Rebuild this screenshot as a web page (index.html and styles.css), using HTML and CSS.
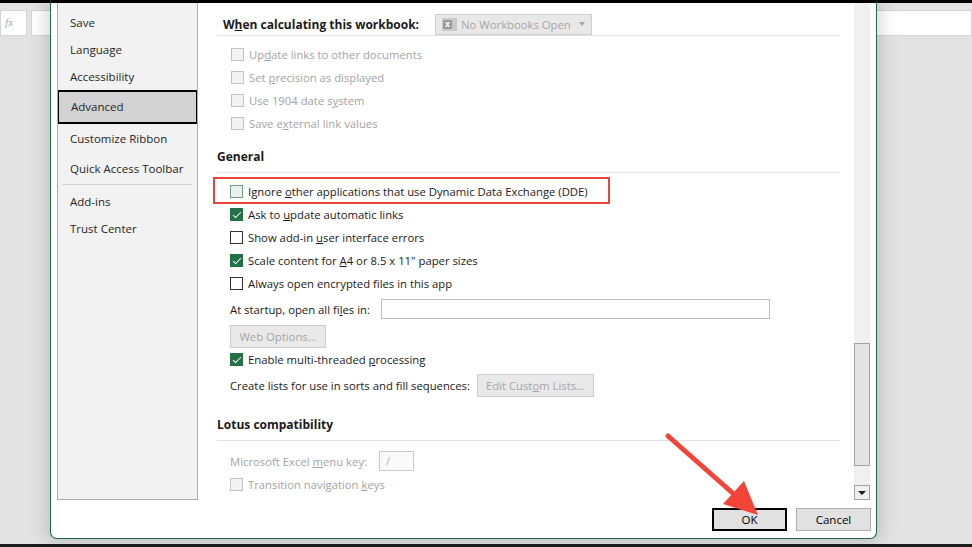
FILE: index.html
```html
<!DOCTYPE html>
<html lang="en">

<head>
  <meta charset="UTF-8" />
  <meta name="viewport" content="width=device-width, initial-scale=1.0" />
  <title>Excel Options - Advanced</title>
  <link rel="stylesheet" href="styles.css">
</head>

<body>
  <div class="excel">
    <div class="formula-bar">
      <div class="fx">fx</div>
      <div class="formula-input"></div>
    </div>
    <div class="sheet"></div>
  </div>

  <div class="dialog">
    <div class="dialog-body">
      <div class="nav">
        <ul class="nav-list">
          <li class="nav-item">Save</li>
          <li class="nav-item">Language</li>
          <li class="nav-item">Accessibility</li>
          <li class="nav-item active">Advanced</li>
          <li class="nav-item tall">Customize Ribbon</li>
          <li class="nav-item tall">Quick Access Toolbar</li>
          <li class="nav-sep"></li>
          <li class="nav-item">Add-ins</li>
          <li class="nav-item">Trust Center</li>
        </ul>
      </div>

      <div class="pane">
        <div class="content">
          <div class="subhead">
            <span>W<u>h</u>en calculating this workbook:</span>
            <div class="dropdown">
              <span class="xl-icon"><span class="xl-mark">x</span></span>
              <span>No Workbooks Open</span>
              <span class="caret"></span>
            </div>
          </div>
          <div class="group first">
            <div class="row disabled"><span class="cb"></span><span>Up<u>d</u>ate links to other documents</span></div>
            <div class="row disabled"><span class="cb"></span><span>Set <u>p</u>recision as displayed</span></div>
            <div class="row disabled"><span class="cb"></span><span>Use 1904 date s<u>y</u>stem</span></div>
            <div class="row disabled"><span class="cb"></span><span>Save e<u>x</u>ternal link values</span></div>
          </div>

          <div class="section-title">General</div>
          <div class="group">
            <div class="row highlight">
              <span class="cb focus"></span>
              <span>Ignore <u>o</u>ther applications that use Dynamic Data Exchange (DDE)</span>
              <span class="callout-box"></span>
            </div>
            <div class="row"><span class="cb checked"></span><span>Ask to <u>u</u>pdate automatic links</span></div>
            <div class="row"><span class="cb"></span><span>Show add-in <u>u</u>ser interface errors</span></div>
            <div class="row"><span class="cb checked"></span><span>Scale content for <u>A</u>4 or 8.5 x 11" paper sizes</span></div>
            <div class="row"><span class="cb"></span><span>Always open encrypted files in this app</span></div>
            <div class="field startup">
              <span class="field-label">At startup, open all fi<u>l</u>es in:</span>
              <span class="text-input wide"></span>
            </div>
            <button class="btn disabled-btn web-options">Web Options...</button>
            <div class="row"><span class="cb checked"></span><span>Enable multi-threaded <u>p</u>rocessing</span></div>
            <div class="field lists">
              <span>Create lists for use in sorts and fill sequences:</span>
              <button class="btn disabled-btn custom-lists">Edit Cust<u>o</u>m Lists...</button>
            </div>
          </div>

          <div class="section-title lotus">Lotus compatibility</div>
          <div class="group">
            <div class="field menu-key disabled">
              <span class="field-label">Microsoft Excel <u>m</u>enu key:</span>
              <span class="text-input short">/</span>
            </div>
            <div class="row disabled transition"><span class="cb"></span><span>Transition navigation <u>k</u>eys</span></div>
          </div>
        </div>

        <div class="scrollbar">
          <div class="thumb"></div>
          <div class="scroll-down"><span class="down-caret"></span></div>
        </div>
      </div>
    </div>

    <div class="dialog-footer">
      <button class="btn default">OK</button>
      <button class="btn">Cancel</button>
    </div>
  </div>

  <svg class="callout-arrow" width="110" height="95" viewBox="660 428 110 95">
    <line x1="668" y1="436" x2="736" y2="496" stroke="#f2453a" stroke-width="5" stroke-linecap="round" />
    <polygon points="758,515 723,504 744,481" fill="#f2453a" />
  </svg>
</body>

</html>
```

FILE: styles.css
```css
* {
  box-sizing: border-box;
}

body {
  margin: 0;
  width: 972px;
  height: 547px;
  overflow: hidden;
  position: relative;
  background: #e3e3e3;
  font-family: "Open Sans", "Noto Sans", sans-serif;
  font-size: 11.3px;
  color: #1a1a1a;
}

/* excel window behind the dialog */
.excel {
  height: 100%;
  display: flex;
  flex-direction: column;
  border-top: 3px solid #000;
  border-bottom: 3px solid #1c1c1c;
}

.formula-bar {
  display: flex;
  gap: 4px;
  height: 26px;
  margin-top: 7px;
}

.fx {
  width: 27px;
  background: #fff;
  border: 1px solid #d4d4d4;
  font-family: "Liberation Serif", serif;
  font-style: italic;
  color: #a8a8a8;
  padding-left: 4px;
  line-height: 23px;
}

.formula-input {
  flex: 1;
  background: #fff;
  border: 1px solid #d4d4d4;
}

.sheet {
  flex: 1;
}

/* dialog */
.dialog {
  position: absolute;
  left: 50px;
  top: 0;
  width: 827px;
  height: 539px;
  background: #fff;
  border: 1px solid #1f6c43;
  border-top: 3px solid #000;
  border-radius: 0 0 7px 7px;
  box-shadow: 0 0 18px 4px rgba(0, 0, 0, 0.16);
  display: flex;
  flex-direction: column;
}

.dialog-body {
  height: 497px;
  display: flex;
  padding-left: 6px;
}

.nav {
  width: 141px;
  background: #f2f2f2;
  border: 1px solid #ababab;
  border-top: none;
  overflow: hidden;
}

.nav-list {
  margin: 6px 0 0;
  padding: 0;
  list-style: none;
}

.nav-item {
  height: 27px;
  line-height: 27px;
  padding-left: 12px;
  color: #262626;
  font-size: 11.5px;
}

.nav-item.tall {
  height: 30px;
  line-height: 30px;
}

.nav-item.active {
  height: 34px;
  line-height: 30px;
  margin: 0 -1px;
  border: 2px solid #000;
  background: #d3d3d3;
}

.nav-sep {
  height: 1px;
  background: #d2d2d2;
  margin: 0 5px 3px 5px;
}

.pane {
  flex: 1;
  display: flex;
  overflow: hidden;
}

.content {
  flex: 1;
  padding: 0 14px 0 19px;
}

.subhead {
  margin-top: 10px;
  height: 23px;
  display: flex;
  align-items: center;
  padding-left: 6px;
  border-bottom: 1px solid #e1e1e1;
  font-weight: bold;
  font-size: 12px;
}

.dropdown {
  margin-left: 16px;
  width: 157px;
  height: 21px;
  display: flex;
  align-items: center;
  gap: 4px;
  padding: 0 6px;
  background: #e8e8e8;
  border: 1px solid #cfcfcf;
  color: #a6a6a6;
  font-weight: normal;
  font-size: 11.3px;
}

.xl-icon {
  width: 15px;
  height: 13px;
  background: #c9c9c9;
}

.xl-mark {
  display: block;
  width: 9px;
  height: 9px;
  margin: 2px 0 0 1px;
  background: #9b9b9b;
  color: #fff;
  font-size: 8px;
  font-weight: bold;
  line-height: 8px;
  text-align: center;
}

.caret {
  margin-left: auto;
  border-left: 3.5px solid transparent;
  border-right: 3.5px solid transparent;
  border-top: 4px solid #a6a6a6;
}

.group {
  padding: 7px 0 0 13px;
}

.group.first {
  padding-left: 14px;
}

.row {
  height: 23px;
  display: flex;
  align-items: center;
  gap: 5px;
  position: relative;
}

.row.disabled,
.field.disabled {
  color: #a3a3a3;
}

.cb {
  width: 13px;
  height: 13px;
  flex-shrink: 0;
  border: 1px solid #333;
  background: #fff;
  position: relative;
}

.disabled .cb {
  border-color: #c3c3c3;
  background: #f3f3f3;
}

.cb.focus {
  border-color: #6f9c82;
  background: #e8f1eb;
}

.cb.checked {
  border-color: #217346;
  background: #217346;
}

.cb.checked::after {
  content: "";
  position: absolute;
  left: 3.5px;
  top: 1px;
  width: 3px;
  height: 7px;
  border: solid #fff;
  border-width: 0 1.5px 1.5px 0;
  transform: rotate(45deg);
}

.callout-box {
  position: absolute;
  left: -17px;
  top: -3px;
  width: 397px;
  height: 27px;
  border: 2px solid #e8443b;
}

.section-title {
  margin-top: 14px;
  font-weight: bold;
  font-size: 12px;
  line-height: 16px;
  padding-bottom: 7px;
  border-bottom: 1px solid #e1e1e1;
}

.section-title.lotus {
  margin-top: 20px;
}

.field {
  display: flex;
  align-items: center;
  height: 20px;
}

.field.startup {
  margin-top: 4px;
}

.field.lists {
  margin-top: 3px;
  height: 23px;
  gap: 7px;
}

.field.menu-key {
  margin-top: 3px;
}

.field-label {
  width: 151px;
  flex-shrink: 0;
}

.menu-key .field-label {
  width: 149px;
}

.text-input {
  height: 20px;
  border: 1px solid #bdbdbd;
  background: #fff;
  padding-left: 6px;
  line-height: 18px;
}

.text-input.wide {
  width: 389px;
}

.text-input.short {
  width: 35px;
  border-color: #cacaca;
  background: #fafafa;
  color: #b0b0b0;
}

.btn {
  height: 23px;
  width: 75px;
  border: 1px solid #adadad;
  background: #e1e1e1;
  font-family: inherit;
  font-size: 11.5px;
  color: #000;
  padding: 0;
  white-space: nowrap;
}

.btn.default {
  border: 2px solid #000;
}

.disabled-btn {
  width: auto;
  padding: 0 8px;
  background: #e9e9e9;
  border-color: #cdcdcd;
  color: #a6a6a6;
  font-size: 11.3px;
}

.web-options {
  display: block;
  margin-top: 6px;
  width: 96px;
}

.custom-lists {
  width: 117px;
  padding: 0;
  flex-shrink: 0;
}

.row.transition {
  margin-top: 2px;
}

.scrollbar {
  width: 16px;
  margin-right: 6px;
  background: #f0f0f0;
  display: flex;
  flex-direction: column;
}

.thumb {
  margin-top: 340px;
  height: 123px;
  background: #e4e4e4;
  border: 1px solid #a2a2a2;
}

.scroll-down {
  margin-top: auto;
  height: 15px;
  border: 1px solid #a2a2a2;
  background: #f0f0f0;
  display: flex;
  align-items: center;
  justify-content: center;
}

.down-caret {
  border-left: 4px solid transparent;
  border-right: 4px solid transparent;
  border-top: 4px solid #1a1a1a;
}

.dialog-footer {
  flex: 1;
  display: flex;
  justify-content: flex-end;
  align-items: flex-start;
  gap: 9px;
  padding: 8px 5px 0 0;
}

.callout-arrow {
  position: absolute;
  left: 660px;
  top: 428px;
}
```
